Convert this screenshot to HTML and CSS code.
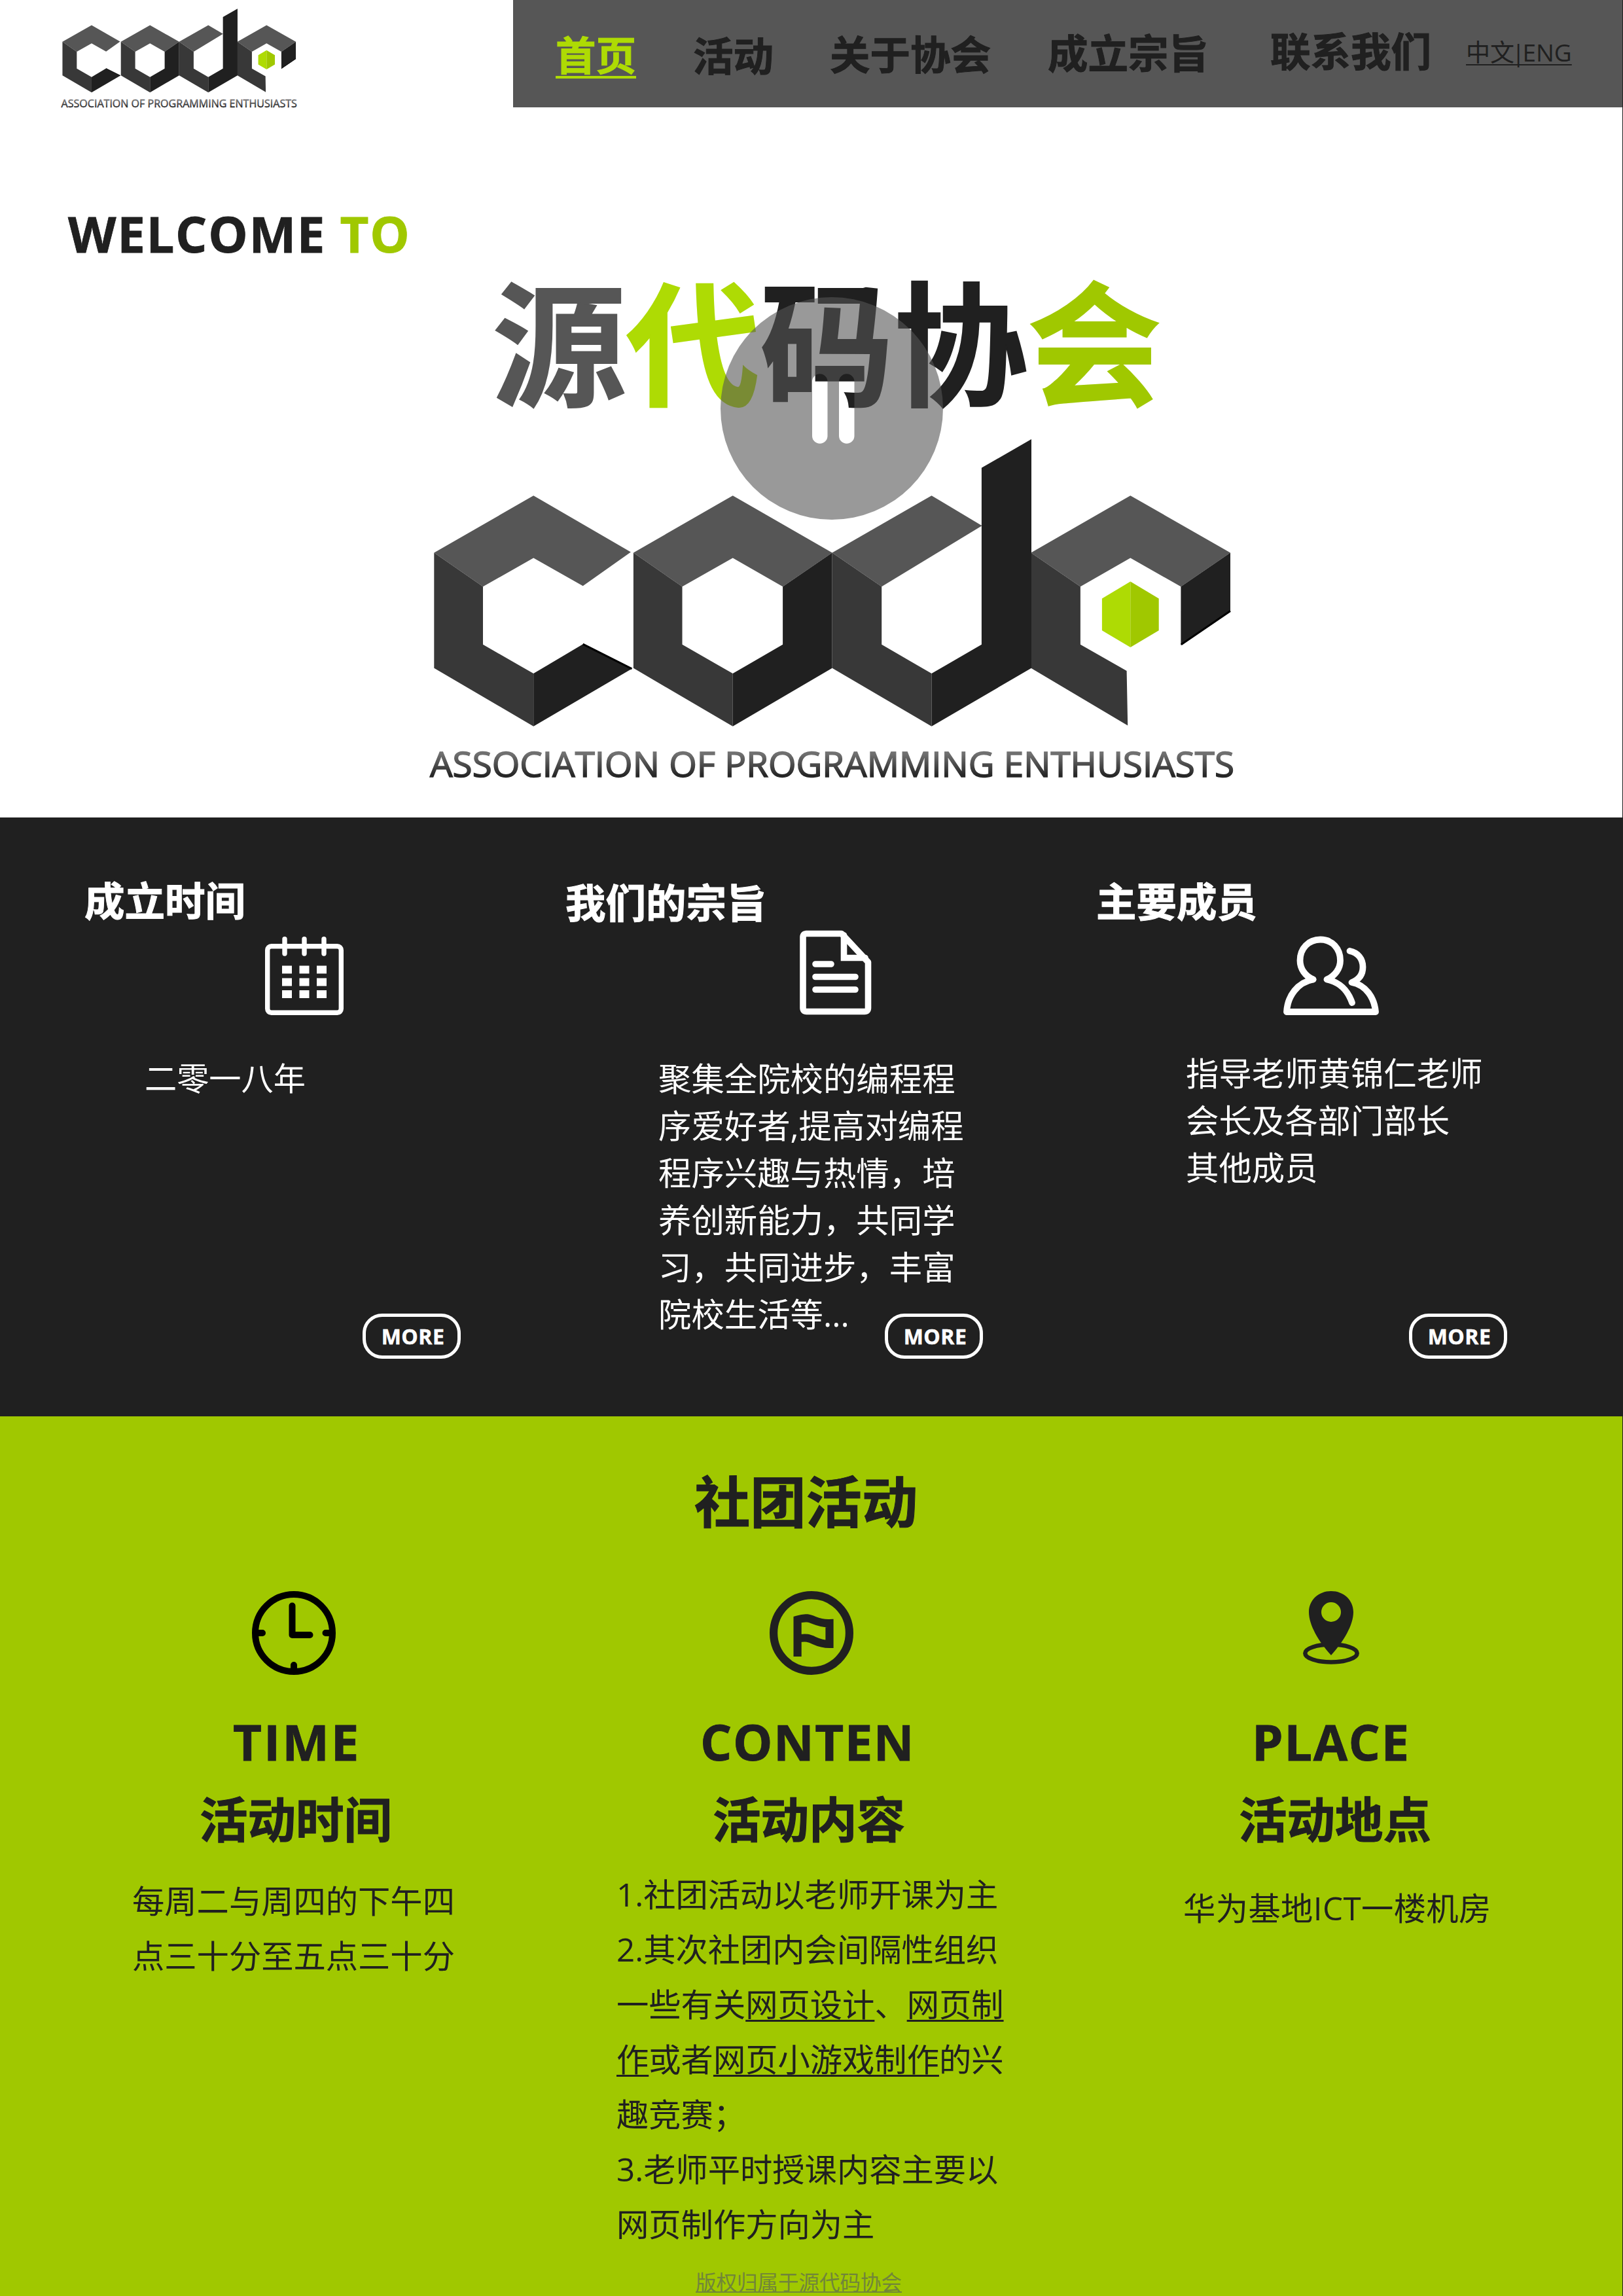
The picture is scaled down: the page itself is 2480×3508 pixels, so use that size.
FILE: index.html
```html
<!DOCTYPE html>
<html lang="zh-CN">
<head>
<meta charset="utf-8">
<title>源代码协会</title>
<link rel="stylesheet" href="styles.css">
</head>
<body>
<svg class="defs" width="0" height="0">
  <defs>
    <linearGradient id="tagline-fill" x1="0" y1="0" x2="0" y2="1">
      <stop offset="0.3" stop-color="#707070"/>
      <stop offset="0.75" stop-color="#262626"/>
    </linearGradient>
    <symbol id="logo" viewBox="655 670 1235 525" preserveAspectRatio="none">
      <g fill="#565656">
        <path d="M663.3 844.5 815.2 757.2 963.9 843.5 890.7 895.3 815.2 852.4 738 896.3Z"/>
        <path d="M967.9 844.5 1119.7 757.2 1271.6 844.5 1196.1 896.3 1119.7 852.4 1042.5 896.3Z"/>
        <path d="M1271.6 844.5 1423.5 757.2 1500.5 803.2 1347.2 896.3Z"/>
        <path d="M1575.4 844.5 1727.3 757.2 1880 844.5 1804.4 896.3 1727.3 852.4 1650.9 896.3Z"/>
      </g>
      <g fill="#383838">
        <path d="M663.3 844.5 738 896.3V984.7L815.2 1029.1V1109.7L663.3 1020.8Z"/>
        <path d="M967.9 844.5 1042.5 896.3V984.7L1119.7 1029.1V1109.7L967.9 1020.8Z"/>
        <path d="M1271.6 844.5 1347.2 896.3V984.7L1423.5 1029.1V1109.7L1271.6 1020.8Z"/>
        <path d="M1575.4 844.5 1650.9 896.3V984.7L1721.6 1025 1723.2 1108.6 1575.4 1020.8Z"/>
      </g>
      <g fill="#202020">
        <path d="M815.2 1029.1 890.7 984.2 965.5 1021.8 815.2 1109.7Z"/>
        <path d="M1271.6 844.5V1020.8L1119.7 1109.7V1029.1L1196.1 984.7V896.3Z"/>
        <path d="M1499.9 714.8 1576 671V1020.8L1423.5 1109.7V1029.1L1499.9 984.7Z"/>
        <path d="M1880 844.5V933.4L1804.4 985.7V896.3Z"/>
      </g>
      <path d="M890.7 984.2 965.5 1021.8M1880 933.4 1804.9 984.7" stroke="#000" stroke-width="3"/>
      <path fill="#aedb04" d="M1727.3 888.5V988.9L1683.9 963.2V914.6Z"/>
      <path fill="#a0c800" d="M1727.3 888.5 1770.7 914.6V963.2L1727.3 988.9Z"/>
      <text class="tagline" x="657" y="1187" textLength="1229" lengthAdjust="spacingAndGlyphs" fill="url(#tagline-fill)" stroke="url(#tagline-fill)">ASSOCIATION OF PROGRAMMING ENTHUSIASTS</text>
    </symbol>
  </defs>
</svg>
<div class="page">
  <header class="header">
    <svg class="header-logo"><use href="#logo"/></svg>
    <nav class="nav">
      <a class="nav-item nav-home">首页</a>
      <a class="nav-item nav-events">活动</a>
      <a class="nav-item nav-about">关于协会</a>
      <a class="nav-item nav-purpose">成立宗旨</a>
      <a class="nav-item nav-contact">联系我们</a>
      <a class="nav-lang">中文<span class="bar">|</span>ENG</a>
    </nav>
  </header>

  <section class="hero">
    <p class="welcome">WELCOME <span class="lime">TO</span></p>
    <h1 class="title"><span class="grey">源</span><span class="bright">代</span>码协<span class="lime">会</span></h1>
    <svg class="hero-logo"><use href="#logo"/></svg>
    <svg class="pause" viewBox="0 0 340 340">
      <path fill="#555" fill-opacity="0.6" fill-rule="evenodd" d="M170 0A170 170 0 1 1 170 340A170 170 0 1 1 170 0ZM140 129v83a11.75 11.75 0 0 0 23.5 0v-83a11.75 11.75 0 0 0-23.5 0ZM181 129v83a11.75 11.75 0 0 0 23.5 0v-83a11.75 11.75 0 0 0-23.5 0Z"/>
    </svg>
  </section>

  <section class="facts">
    <article class="fact founded">
      <h2 class="fact-title">成立时间</h2>
      <svg class="fact-icon" viewBox="0 0 120 120" fill="none" stroke="#fff">
        <rect x="3.7" y="14.7" width="112.6" height="101.6" rx="6" stroke-width="7.4"/>
        <path d="M30 3.7V26M60 3.7V26M90 3.7V26" stroke-width="7.4" stroke-linecap="round"/>
        <path d="M26 50.5H41M52.500 50.500H67.500M79 50.500H94M26 69.500H41M52.500 69.500H67.500M79 69.500H94M26 88H41M52.500 88H67.500M79 88H94" stroke-width="12"/>
      </svg>
      <p class="fact-text">二零一八年</p>
      <a class="more">MORE</a>
    </article>
    <article class="fact purpose">
      <h2 class="fact-title">我们的宗旨</h2>
      <svg class="fact-icon" viewBox="0 0 110 130" fill="none" stroke="#fff" stroke-width="9.600" stroke-linejoin="round" stroke-linecap="round">
        <path d="M10 5.500H64L104.500 49V119Q104.500 124.500 99 124.500H10.500Q5 124.500 5 119V11Q5 5.500 10.500 5.500Z"/>
        <path d="M67.500 8V42.500H100" stroke-linejoin="miter"/>
        <path d="M24 52H48M24 71.500H85M24 91H85"/>
      </svg>
      <p class="fact-text">聚集全院校的编程程<br>序爱好者,提高对编程<br>程序兴趣与热情，培<br>养创新能力，共同学<br>习，共同进步，丰富<br>院校生活等...</p>
      <a class="more">MORE</a>
    </article>
    <article class="fact members">
      <h2 class="fact-title">主要成员</h2>
      <svg class="fact-icon" viewBox="0 0 146 122" fill="none" stroke="#fff" stroke-width="9.800" stroke-linejoin="round" stroke-linecap="round">
        <path d="M45.500 66.500C33 61 25.500 50 25.500 37.500C25.500 19 38.500 5.500 56.500 5.500C74.500 5.500 87 19 87 37.500C87 50 79 61 66.500 66.500C86 71 98 82 105 102"/>
        <path d="M45.500 66.500C22 71 6.500 91 5 116H141C139 94 126 75 104.500 71C115 67 121.500 59 121.500 47.500C121.500 35 114 25.500 101.500 23"/>
      </svg>
      <p class="fact-text">指导老师黄锦仁老师<br>会长及各部门部长<br>其他成员</p>
      <a class="more">MORE</a>
    </article>
  </section>

  <section class="events">
    <h2 class="events-title">社团活动</h2>
    <div class="events-grid">
      <article class="event time">
        <svg class="event-icon" viewBox="0 0 128 128" fill="none" stroke="#000" stroke-width="10">
          <circle cx="64" cy="64" r="59"/>
          <path d="M61.500 22.500V67H88.500M8 64H16M120 64H112.500M64 120V113" stroke-linecap="round" stroke-linejoin="round"/>
        </svg>
        <h3 class="event-en">TIME</h3>
        <h4 class="event-zh">活动时间</h4>
        <p class="event-text">每周二与周四的下午四<br>点三十分至五点三十分</p>
      </article>
      <article class="event content">
        <svg class="event-icon" viewBox="0 0 128 128" fill="none" stroke="#202020" stroke-width="12.200">
          <circle cx="64" cy="64" r="57.900"/>
          <path d="M42.600 100V43.500C66 36 66 50 91.500 49V81C66 81 66 67 43 73"/>
        </svg>
        <h3 class="event-en">CONTEN</h3>
        <h4 class="event-zh">活动内容</h4>
        <p class="event-text">1.社团活动以老师开课为主<br>2.其次社团内会间隔性组织<br>一些有关<u>网页设计</u>、<u>网页制<br>作</u>或者<u>网页小游戏制作</u>的兴<br>趣竞赛；<br>3.老师平时授课内容主要以<br>网页制作方向为主</p>
      </article>
      <article class="event place">
        <svg class="event-icon" viewBox="0 0 86 112">
          <ellipse cx="43" cy="95" rx="39.700" ry="13.500" fill="none" stroke="#202020" stroke-width="6.500"/>
          <path fill="#202020" fill-rule="evenodd" d="M43 0C62 0 77 13.500 77 32C77 52 62 77 43 98C24 77 9 52 9 32C9 13.500 24 0 43 0ZM43 17A15 15 0 1 0 43 47A15 15 0 1 0 43 17Z"/>
        </svg>
        <h3 class="event-en">PLACE</h3>
        <h4 class="event-zh">活动地点</h4>
        <p class="event-text">华为基地ICT一楼机房</p>
      </article>
    </div>
    <footer class="copyright">版权归属于源代码协会</footer>
  </section>
</div>
</body>
</html>
```
FILE: styles.css
```css
* { box-sizing: border-box; }
body {
  margin: 0;
  background: #202020;
  color: #202020;
  font-family: "Open Sans", "Noto Sans CJK SC", sans-serif;
}
h1, h2, h3, h4, p { margin: 0; white-space: nowrap; }
svg { display: block; flex: none; }
.defs { position: absolute; }
.page { width: 2479px; height: 3508px; overflow: hidden; background: #fff; }
.tagline { font-size: 53px; font-weight: 500; stroke-width: 1.500px; }
.grey { color: #565656; }
.bright { color: #aedb04; }
.lime { color: #a0c800; }

/* Headings are set slightly heavier than the bold face */
.nav-item, .fact-title, .events-title, .event-zh { -webkit-text-stroke: 1px currentColor; }
.title { -webkit-text-stroke: 2px currentColor; }
.welcome, .event-en { -webkit-text-stroke: 0.800px currentColor; }

.header { display: flex; height: 164px; justify-content: space-between; }
.header-logo { width: 362px; height: 153px; margin: 13px 0 0 93px; overflow: visible; }
.nav {
  display: flex;
  align-items: flex-start;
  width: 1695px;
  padding-left: 65px;
  background: #565656;
}
.nav-item { font-size: 61.500px; font-weight: 700; line-height: 80px; white-space: nowrap; }
.nav-home {
  margin-top: 44px;
  color: #aedb04;
  text-decoration: underline 4px;
  text-underline-offset: 8px;
  text-decoration-skip-ink: none;
}
.nav-events { margin: 45px 0 0 87px; }
.nav-about { margin: 43px 0 0 86px; }
.nav-purpose { margin: 41px 0 0 87px; }
.nav-contact { margin: 38px 0 0 94px; }
.nav-lang {
  margin: 55px 0 0 53px;
  font-size: 37px;
  line-height: 50px;
  white-space: nowrap;
  text-decoration: underline 2px;
  text-underline-offset: 4px;
  text-decoration-skip-ink: none;
}
.bar { margin: 0 -4px 0 -4px; }

.hero { position: relative; height: 1085px; padding-top: 143px; }
.welcome { margin-left: 104px; font-size: 76px; font-weight: 700; line-height: 100px; letter-spacing: 1.700px; }
.title { margin: -2px 0 0 752px; font-size: 204.500px; font-weight: 700; line-height: 240px; }
.hero-logo { width: 1235px; height: 525px; margin: 25px 0 0 655px; overflow: visible; }
.pause { position: absolute; left: 1101px; top: 290px; width: 340px; height: 340px; }

.facts {
  display: grid;
  grid-template-columns: 800px 800px 879px;
  height: 915px;
  background: #202020;
  color: #fff;
}
.fact { display: flex; flex-direction: column; align-items: flex-start; }
.fact-title { position: relative; top: -1px; font-size: 61.500px; font-weight: 700; line-height: 72px; }
.fact-text { font-size: 50.400px; line-height: 72px; }
.more {
  width: 150px;
  height: 69px;
  padding-left: 4px;
  border: 5px solid #fff;
  border-radius: 30px;
  font-size: 32px;
  font-weight: 700;
  line-height: 60px;
  letter-spacing: 0.500px;
  text-align: center;
  -webkit-text-stroke: 0.500px currentColor;
}
.founded { padding-top: 92px; }
.founded .fact-title { margin-left: 129px; }
.founded .fact-icon { width: 120px; height: 120px; margin: 18px 0 60px 405px; }
.founded .fact-text { height: 396px; margin-left: 221px; font-size: 49.200px; }
.founded .more { margin-left: 554px; }
.purpose { padding-top: 95px; }
.purpose .fact-title { margin-left: 64px; }
.purpose .fact-icon { width: 110px; height: 130px; margin: 5px 0 61px 422px; }
.purpose .fact-text { height: 395px; margin-left: 206px; }
.purpose .more { margin-left: 552px; }
.members { padding-top: 93px; }
.members .fact-title { margin-left: 75px; }
.members .fact-icon { width: 146px; height: 122px; margin: 16px 0 52px 361px; }
.members .fact-text { height: 403px; margin-left: 212px; }
.members .more { margin-left: 553px; }

.events { height: 1344px; padding-top: 80px; background: #a0c800; }
.events-title { margin-left: 1061px; font-size: 85.300px; font-weight: 700; line-height: 100px; }
.events-grid { display: grid; grid-template-columns: 850px 850px 779px; height: 1097px; padding-top: 87px; }
.event { display: flex; flex-direction: column; align-items: flex-start; }
.event-icon { width: 128px; height: 128px; margin-bottom: 52px; }
.event-en { font-size: 76px; font-weight: 700; line-height: 100px; letter-spacing: 1.500px; }
.event-zh { margin-top: 19px; font-size: 73.500px; font-weight: 700; line-height: 100px; }
.event-text { font-size: 49.300px; line-height: 84px; }
.event-text u { text-decoration: underline 2.500px; text-underline-offset: 5px; text-decoration-skip-ink: none; }
.time .event-icon { margin-left: 385px; }
.time .event-en { margin-left: 356px; letter-spacing: 3px; }
.time .event-zh { margin-left: 305px; }
.time .event-text { margin: 32px 0 0 202px; }
.content .event-icon { margin-left: 326px; }
.content .event-en { margin-left: 220px; }
.content .event-zh { margin-left: 239px; }
.content .event-text { margin: 22px 0 0 92px; }
.place .event-icon { width: 86px; height: 112px; margin: 0 0 68px 291px; }
.place .event-en { margin-left: 213px; }
.place .event-zh { margin-left: 193px; }
.place .event-text { margin: 43px 0 0 108px; letter-spacing: 0.400px; }
.copyright {
  width: max-content;
  margin: 26px 0 0 1063px;
  color: #71853a;
  font-size: 31.500px;
  line-height: 40px;
  text-decoration: underline 2px;
  text-underline-offset: 2px;
  text-decoration-skip-ink: none;
}
```
